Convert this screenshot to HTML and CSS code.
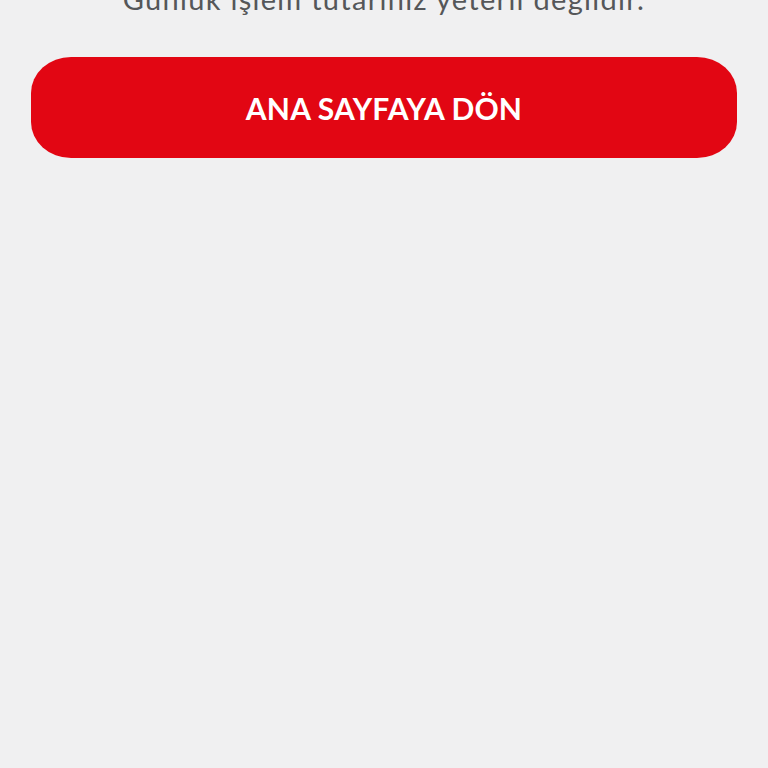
FILE: index.html
```html
<!DOCTYPE html>
<html lang="tr">

<head>
    <meta charset="UTF-8">
    <meta name="viewport" content="width=device-width, initial-scale=1.0">
    <title>İşlem sonucu</title>

    <link rel="stylesheet" href="styles.css">
</head>

<body>
    <div id="resultBox">
        <p id="message">Günlük işlem tutarınız yeterli değildir.</p>

        <button id="homeBtn" onclick="location.href='index.html'">ANA SAYFAYA DÖN</button>
    </div>
</body>

</html>
```

FILE: styles.css
```css
body {
    margin: 0;
    background-color: #f0f0f1;
    font-family: Lato, "Open Sans", sans-serif;
}

#resultBox {
    display: flex;
    flex-direction: column;
    padding: 0 31px;
}

/* message */
#message {
    margin: -18px 0 0;
    font-size: 29px;
    line-height: 34px;
    letter-spacing: 1.3px;
    color: #555759;
    text-align: center;
}

/* button */
#homeBtn {
    display: flex;
    align-items: center;
    justify-content: center;
    margin-top: 41px;
    height: 101px;
    padding-top: 2px;
    border: none;
    border-radius: 40px / 36px;
    background-color: #e20613;
    cursor: pointer;

    font-family: Lato, "Open Sans", sans-serif;
    font-size: 30px;
    font-weight: bold;
    letter-spacing: 0.2px;
    color: white;
}
```
